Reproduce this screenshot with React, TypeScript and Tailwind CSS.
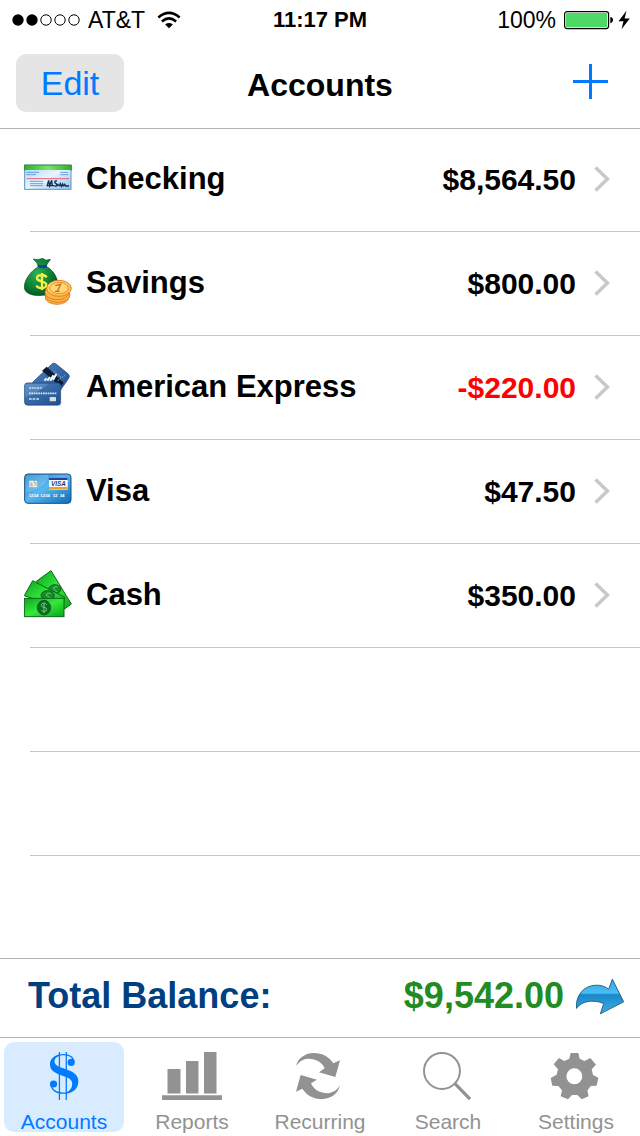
import { useState } from 'react';
import type { ReactNode } from 'react';

/* ------------------------------ Account icons ----------------------------- */

function CheckIcon() {
  return (
    <svg viewBox="24 -3 144 144" className="mb-0.5 size-12 shrink-0" aria-hidden="true">
      <defs>
        <linearGradient id="checkPaper" x1="0" y1="0" x2="1" y2="1">
          <stop offset="0" stopColor="#a9d4f5" />
          <stop offset="0.5" stopColor="#e6f5ff" />
          <stop offset="1" stopColor="#8cc6f0" />
        </linearGradient>
        <linearGradient id="checkTop" x1="0" y1="0" x2="1" y2="0">
          <stop offset="0" stopColor="#2fb02c" />
          <stop offset="0.5" stopColor="#7be36b" />
          <stop offset="1" stopColor="#2fae2b" />
        </linearGradient>
      </defs>
      <rect x="26" y="31" width="139" height="72" fill="url(#checkPaper)" stroke="#5f97bd" strokeWidth="3" />
      <rect x="26" y="31" width="139" height="14" fill="url(#checkTop)" />
      <path d="M25 47V30H166V47" fill="none" stroke="#3b8148" strokeWidth="3" />
      <path d="M31 52H69M31 59H60M133 52H157M133 59H157M42 79H81M42 86H81M42 92H81" stroke="#4d8fd6" strokeWidth="2.5" />
      <path d="M33 71H159" stroke="#f0405c" strokeWidth="2.5" />
      <path
        d="M93 94L98 76L101 93L107 76L109 94M92 92H114M123 78C115 76 114 84 120 86C126 89 121 96 115 92M126 94V86M130 94L133 86L136 94L140 87L142 94M142 94L146 88L149 93H159"
        fill="none"
        stroke="#162b4d"
        strokeWidth="4"
      />
    </svg>
  );
}

function MoneyBagIcon() {
  return (
    <svg viewBox="24 24 144 144" className="mb-0.5 size-12 shrink-0" aria-hidden="true">
      <defs>
        <radialGradient id="bagFill" cx="0.38" cy="0.4" r="0.65">
          <stop offset="0" stopColor="#2fb052" />
          <stop offset="0.6" stopColor="#0c8336" />
          <stop offset="1" stopColor="#045022" />
        </radialGradient>
        <linearGradient id="coinFace" x1="0" y1="0" x2="1" y2="1">
          <stop offset="0" stopColor="#ffe27a" />
          <stop offset="1" stopColor="#ffb23c" />
        </linearGradient>
      </defs>
      <path
        d="M52 27L66 29L80 25L90 31L103 28C99 37 92 41 90 49C107 57 123 76 126 102C128 122 112 136 80 136C48 139 25 130 25 111C25 88 45 63 67 50C66 39 58 35 52 27Z"
        fill="url(#bagFill)"
        stroke="#06501f"
        strokeWidth="2"
      />
      <path d="M64 43Q77 49 94 43L92 53Q78 58 66 51Z" fill="#17429b" />
      <path
        d="M92 82C87 73 64 72 63 84C62 97 92 91 91 105C90 117 67 117 61 107M78 69V120"
        fill="none"
        stroke="#f5ef45"
        strokeWidth="7"
      />
      <g fill="#ffb546" stroke="#d8741a" strokeWidth="2.5">
        <ellipse cx="123" cy="142" rx="35" ry="21" />
        <ellipse cx="125" cy="135" rx="37" ry="22" />
        <ellipse cx="123" cy="127" rx="36" ry="22" />
        <ellipse cx="129" cy="115" rx="37" ry="24" fill="url(#coinFace)" />
        <ellipse cx="129" cy="114" rx="28" ry="17" fill="#ffd575" strokeWidth="2" />
      </g>
      <path d="M118 107L134 103L124 124M117 124H131" fill="none" stroke="#c8731c" strokeWidth="4" />
    </svg>
  );
}

function CardsIcon() {
  return (
    <svg viewBox="24 21 144 144" className="mb-0.5 size-12 shrink-0" aria-hidden="true">
      <defs>
        <linearGradient id="cardFill" x1="0" y1="0" x2="1" y2="1">
          <stop offset="0" stopColor="#4f83bd" />
          <stop offset="0.5" stopColor="#3568a6" />
          <stop offset="1" stopColor="#1e4f8d" />
        </linearGradient>
      </defs>
      <path
        d="M50 82L107 28Q113 22 120 27L157 57Q163 64 157 71L118 128L60 120Z"
        fill="url(#cardFill)"
        stroke="#234f86"
        strokeWidth="2.5"
      />
      <path d="M78 47L92 35L143 83L134 96Z" fill="#0d1c31" />
      <path d="M85 77L92 70M94 77L102 66M103 77L112 61M111 75L121 57" stroke="#f2f6fb" strokeWidth="6" />
      <path d="M113 48L135 66M125 77L147 61" stroke="#87abd3" strokeWidth="3" strokeDasharray="5 3" />
      <rect x="29" y="87" width="107" height="66" rx="8" fill="#9aa7b8" opacity="0.5" />
      <rect x="26" y="84" width="107" height="66" rx="8" fill="url(#cardFill)" stroke="#214e87" strokeWidth="2.5" />
      <path d="M27 92Q27 86 34 86H98L58 116L27 126Z" fill="#7ba4d2" opacity="0.4" />
      <path d="M39 99H79" stroke="#c9dcf0" strokeWidth="5" strokeDasharray="6 2" />
      <path d="M39 115H121" stroke="#d7e5f5" strokeWidth="5" strokeDasharray="5 2" />
      <path d="M39 132H70" stroke="#d7e5f5" strokeWidth="4" strokeDasharray="8 3" />
      <rect x="101" y="126" width="19" height="13" rx="2" fill="#dddcd2" />
    </svg>
  );
}

function VisaIcon() {
  return (
    <svg viewBox="24 3 144 144" className="mb-0.5 size-12 shrink-0" aria-hidden="true">
      <defs>
        <linearGradient id="visaFill" x1="0" y1="0" x2="1" y2="1">
          <stop offset="0" stopColor="#1b78c1" />
          <stop offset="0.45" stopColor="#58b8ee" />
          <stop offset="1" stopColor="#0c6cb8" />
        </linearGradient>
      </defs>
      <rect x="26" y="27" width="139" height="88" rx="10" fill="url(#visaFill)" stroke="#1a5080" strokeWidth="3" />
      <path d="M28 36Q28 29 36 29H98Q94 70 28 82Z" fill="#9bd7fa" opacity="0.35" />
      <rect x="39" y="47" width="25" height="20" rx="4" fill="#f2efdf" />
      <path d="M39 54H48V67M48 60H39M64 54H55V47M55 60H64" fill="none" stroke="#8d9297" strokeWidth="2" />
      <rect x="99" y="38" width="56" height="37" fill="#fff" />
      <rect x="99" y="38" width="56" height="7" fill="#2d3f96" />
      <rect x="99" y="66" width="56" height="8" fill="#e8a321" />
      <text x="127" y="62" textAnchor="middle" fontSize="19" fontStyle="italic" fontWeight="bold" fill="#26367d">
        VISA
      </text>
      <g fontSize="13" fontWeight="bold" fill="#fff">
        <text x="38" y="97">1234</text>
        <text x="73" y="97">1234</text>
        <text x="110" y="97">12</text>
        <text x="131" y="97">34</text>
      </g>
    </svg>
  );
}

function CashIcon() {
  return (
    <svg viewBox="24 24 144 144" className="mb-0.5 size-12 shrink-0" aria-hidden="true">
      <defs>
        <linearGradient id="billFill" x1="0" y1="0" x2="1" y2="1">
          <stop offset="0" stopColor="#0aa51c" />
          <stop offset="0.5" stopColor="#35e83c" />
          <stop offset="1" stopColor="#07a319" />
        </linearGradient>
      </defs>
      <g fill="url(#billFill)" stroke="#0a661a" strokeWidth="3">
        <path d="M61 58L105 26L166 126L144 142L100 120Z" />
        <ellipse cx="116" cy="82" rx="18" ry="14" fill="#168e2a" />
        <path d="M25 101L50 56L146 106L138 140Z" />
        <ellipse cx="95" cy="100" rx="20" ry="14" fill="#178b2b" />
        <rect x="25" y="109" width="119" height="55" />
        <ellipse cx="84" cy="137" rx="20" ry="22" fill="#0e6a28" />
      </g>
      <path
        d="M92 128C88 122 76 123 76 130C76 138 93 134 92 143C91 150 79 150 75 144M84 121V153M105 96C98 91 90 94 91 99C93 104 101 103 101 107M125 75C117 72 112 76 113 81C116 85 122 84 121 90"
        fill="none"
        stroke="#6fd677"
        strokeWidth="3"
      />
    </svg>
  );
}

/* -------------------------------- Tab icons ------------------------------- */

function DollarIcon() {
  return (
    <svg viewBox="121 63 144 147" className="size-12" fill="currentColor" aria-hidden="true">
      <path d="M226 92C224 78 210 69 192 69C166 69 150 83 150 101C150 122 172 130 192 137C208 142 218 147 218 160C218 176 208 187 190 187C174 187 163 181 158 172L150 160C152 180 168 191 190 191C218 191 237 176 237 153C237 130 217 121 195 114C178 109 164 104 164 92C164 80 176 73 192 73C204 73 213 77 218 84Z" />
      <circle cx="215" cy="95" r="11" />
      <circle cx="161" cy="161" r="11" />
      <path d="M179 63V210M200 63V210" stroke="currentColor" strokeWidth="4" />
    </svg>
  );
}

function ReportsIcon() {
  return (
    <svg viewBox="0 0 60 48" className="h-12 w-15" fill="currentColor" aria-hidden="true">
      <path d="M5.5 17h13v24.5h-13zM24 9h12.5v32.5H24zM42 0h12.5v41.5H42zM0 43.2h60v4.8H0z" />
    </svg>
  );
}

function RecurringIcon() {
  return (
    <svg viewBox="108 63 144 144" className="size-12" fill="currentColor" aria-hidden="true">
      <path d="M108 106C114 80 137 66 161 66C187 66 208 78 220 97L240 88L226 138L177 124L194 112C187 93 165 82 143 83C128 84 116 93 108 106Z" />
      <path d="M240 163C234 190 211 204 186 204C160 204 140 193 127 173L108 182L122 132L171 146L153 157C161 177 183 188 205 187C220 185 232 177 240 163Z" />
    </svg>
  );
}

function SearchIcon() {
  return (
    <svg viewBox="492 62 147 147" className="size-12 overflow-visible" fill="none" stroke="currentColor" aria-hidden="true">
      <circle cx="547" cy="120" r="55" strokeWidth="6" />
      <path d="M586 158L633 206" strokeWidth="10" />
    </svg>
  );
}

function GearIcon() {
  return (
    <svg viewBox="876 64 144 144" className="size-12 overflow-visible" fill="currentColor" fillRule="evenodd" aria-hidden="true">
      <path d="M932 67H955L959 84L973 91L991 82L1008 102L995 116L999 133L1015 141L1010 165L992 166L982 180L986 197L965 206L952 193H936L924 206L902 197L906 179L895 166L877 165L872 142L890 132L894 116L881 101L897 82L913 91L928 84ZM943 113A24 24 0 1 0 943 161A24 24 0 1 0 943 113Z" />
    </svg>
  );
}

/* ---------------------------------- Data ---------------------------------- */

type Account = { name: string; balance: string; negative?: boolean; icon: ReactNode };

const accounts: Account[] = [
  { name: 'Checking', balance: '$8,564.50', icon: <CheckIcon /> },
  { name: 'Savings', balance: '$800.00', icon: <MoneyBagIcon /> },
  { name: 'American Express', balance: '-$220.00', negative: true, icon: <CardsIcon /> },
  { name: 'Visa', balance: '$47.50', icon: <VisaIcon /> },
  { name: 'Cash', balance: '$350.00', icon: <CashIcon /> },
];

const tabs: { label: string; icon: ReactNode }[] = [
  { label: 'Accounts', icon: <DollarIcon /> },
  { label: 'Reports', icon: <ReportsIcon /> },
  { label: 'Recurring', icon: <RecurringIcon /> },
  { label: 'Search', icon: <SearchIcon /> },
  { label: 'Settings', icon: <GearIcon /> },
];

/* --------------------------------- Layout --------------------------------- */

function StatusBar() {
  return (
    <div className="grid h-10 grid-cols-[1fr_auto_1fr] items-center px-3 text-[23px] leading-none">
      <div className="flex items-center gap-2">
        <svg viewBox="0 0 68 12" className="h-3 w-17" aria-hidden="true">
          <circle cx="6" cy="6" r="5.7" />
          <circle cx="20" cy="6" r="5.7" />
          <g fill="none" stroke="#000" strokeWidth="1">
            <circle cx="34" cy="6" r="5.2" />
            <circle cx="48" cy="6" r="5.2" />
            <circle cx="62" cy="6" r="5.2" />
          </g>
        </svg>
        <span>AT&amp;T</span>
        <svg viewBox="0 0 26 18" className="ml-1 h-[18px] w-6" fill="none" stroke="#000" strokeWidth="2.8" aria-hidden="true">
          <path d="M1.5 6.2Q13-3.6 24.5 6.2" />
          <path d="M5.3 10.5Q13 4.1 20.7 10.5" />
          <path d="M13 18L8.8 13.8Q13 10.6 17.2 13.8Z" fill="#000" stroke="none" />
        </svg>
      </div>
      <span className="text-[22px] font-bold">11:17 PM</span>
      <div className="flex items-center justify-end gap-2">
        <span>100%</span>
        <svg viewBox="0 0 66 20" className="-mr-0.5 h-5 w-[66px]" aria-hidden="true">
          <rect x="0.6" y="1.6" width="44" height="17" rx="2.5" fill="#fff" stroke="#000" strokeWidth="1.2" />
          <rect x="2" y="3" width="41.2" height="14.2" rx="1" fill="#4cd964" />
          <path d="M46.3 7Q49 7.4 49 10T46.3 13.4Z" />
          <path d="M62.5 0.8L54.5 11.2H59.5L57.5 19.2L65.8 8.4H60.6Z" />
        </svg>
      </div>
    </div>
  );
}

function AccountRow({ account }: { account: Account }) {
  return (
    <li>
      <button type="button" className="flex h-[103px] w-full items-center pr-[30px] pb-px pl-6 text-left font-bold">
        {account.icon}
        <span className="ml-3.5 flex-1 text-[31px]">{account.name}</span>
        <span className={account.negative ? 'text-[30px] text-[#ff0000]' : 'text-[30px]'}>{account.balance}</span>
        <svg viewBox="0 0 16 26" className="ml-[18px] h-[26px] w-4" fill="none" stroke="#c7c7cc" strokeWidth="3.4" aria-hidden="true">
          <path d="M1.5 1.5L13.5 13L1.5 24.5" />
        </svg>
      </button>
      <hr className="ml-[30px] border-[#c8c7cc]" />
    </li>
  );
}

export default function App() {
  const [activeTab, setActiveTab] = useState('Accounts');

  return (
    <div className="flex min-h-screen flex-col bg-white font-['Liberation_Sans',Arial,sans-serif] text-black">
      <StatusBar />

      <header className="grid h-[89px] grid-cols-[1fr_auto_1fr] items-center border-b border-[#b2b2b2] px-4 pb-0.5">
        <button type="button" className="h-[58px] w-[108px] rounded-[10px] bg-[#e5e5e5] text-[34px] text-[#007aff]">
          Edit
        </button>
        <h1 className="pt-1 text-[32px] font-bold">Accounts</h1>
        <button type="button" aria-label="Add account" className="mr-4 justify-self-end pb-1">
          <svg viewBox="0 0 35 35" className="size-[35px]" stroke="#007aff" strokeWidth="3" aria-hidden="true">
            <path d="M17.5 0V35M0 17.5H35" />
          </svg>
        </button>
      </header>

      <main className="-mt-px flex-1">
        <ul>
          {accounts.map((account) => (
            <AccountRow key={account.name} account={account} />
          ))}
        </ul>
        {/* Blank rows keep the ruled lines going below the last account */}
        <hr className="mt-[103px] ml-[30px] border-[#c8c7cc]" />
        <hr className="mt-[103px] ml-[30px] border-[#c8c7cc]" />
      </main>

      <section className="flex h-[79px] items-center border-t border-[#b2b2b2] pr-4 pb-1 pl-7 text-[36px] font-bold">
        <span className="flex-1 text-[#004080]">Total Balance:</span>
        <span className="text-[#228b22]">$9,542.00</span>
        <button type="button" aria-label="Transfer" className="ml-3">
          <svg viewBox="48 49 144 110" className="h-[37px] w-12" aria-hidden="true">
            <defs>
              <linearGradient id="arrowFill" x1="0" y1="0" x2="0" y2="1">
                <stop offset="0" stopColor="#3aa5e2" />
                <stop offset="0.4" stopColor="#48bff5" />
                <stop offset="0.45" stopColor="#1d87c9" />
                <stop offset="1" stopColor="#39aee8" />
              </linearGradient>
            </defs>
            <path
              d="M49 140C47 100 71 70 110 70C124 70 136 74 146 82L157 52L191 120L121 156L131 125C100 112 65 117 49 140Z"
              fill="url(#arrowFill)"
              stroke="#174f78"
              strokeWidth="2.5"
              strokeLinejoin="round"
            />
          </svg>
        </button>
      </section>

      <nav className="grid h-[99px] grid-cols-5 border-t border-[#b2b2b2]">
        {tabs.map((tab) => (
          <div key={tab.label} className="p-1">
            <button
              type="button"
              onClick={() => setActiveTab(tab.label)}
              className={`flex h-[90px] w-full flex-col items-center gap-3 rounded-[10px] pt-2.5 ${
                activeTab === tab.label ? 'bg-[#d9ebff] text-[#007aff]' : 'text-[#929292]'
              }`}
            >
              {tab.icon}
              <span className="text-[21px] leading-5">{tab.label}</span>
            </button>
          </div>
        ))}
      </nav>
    </div>
  );
}
